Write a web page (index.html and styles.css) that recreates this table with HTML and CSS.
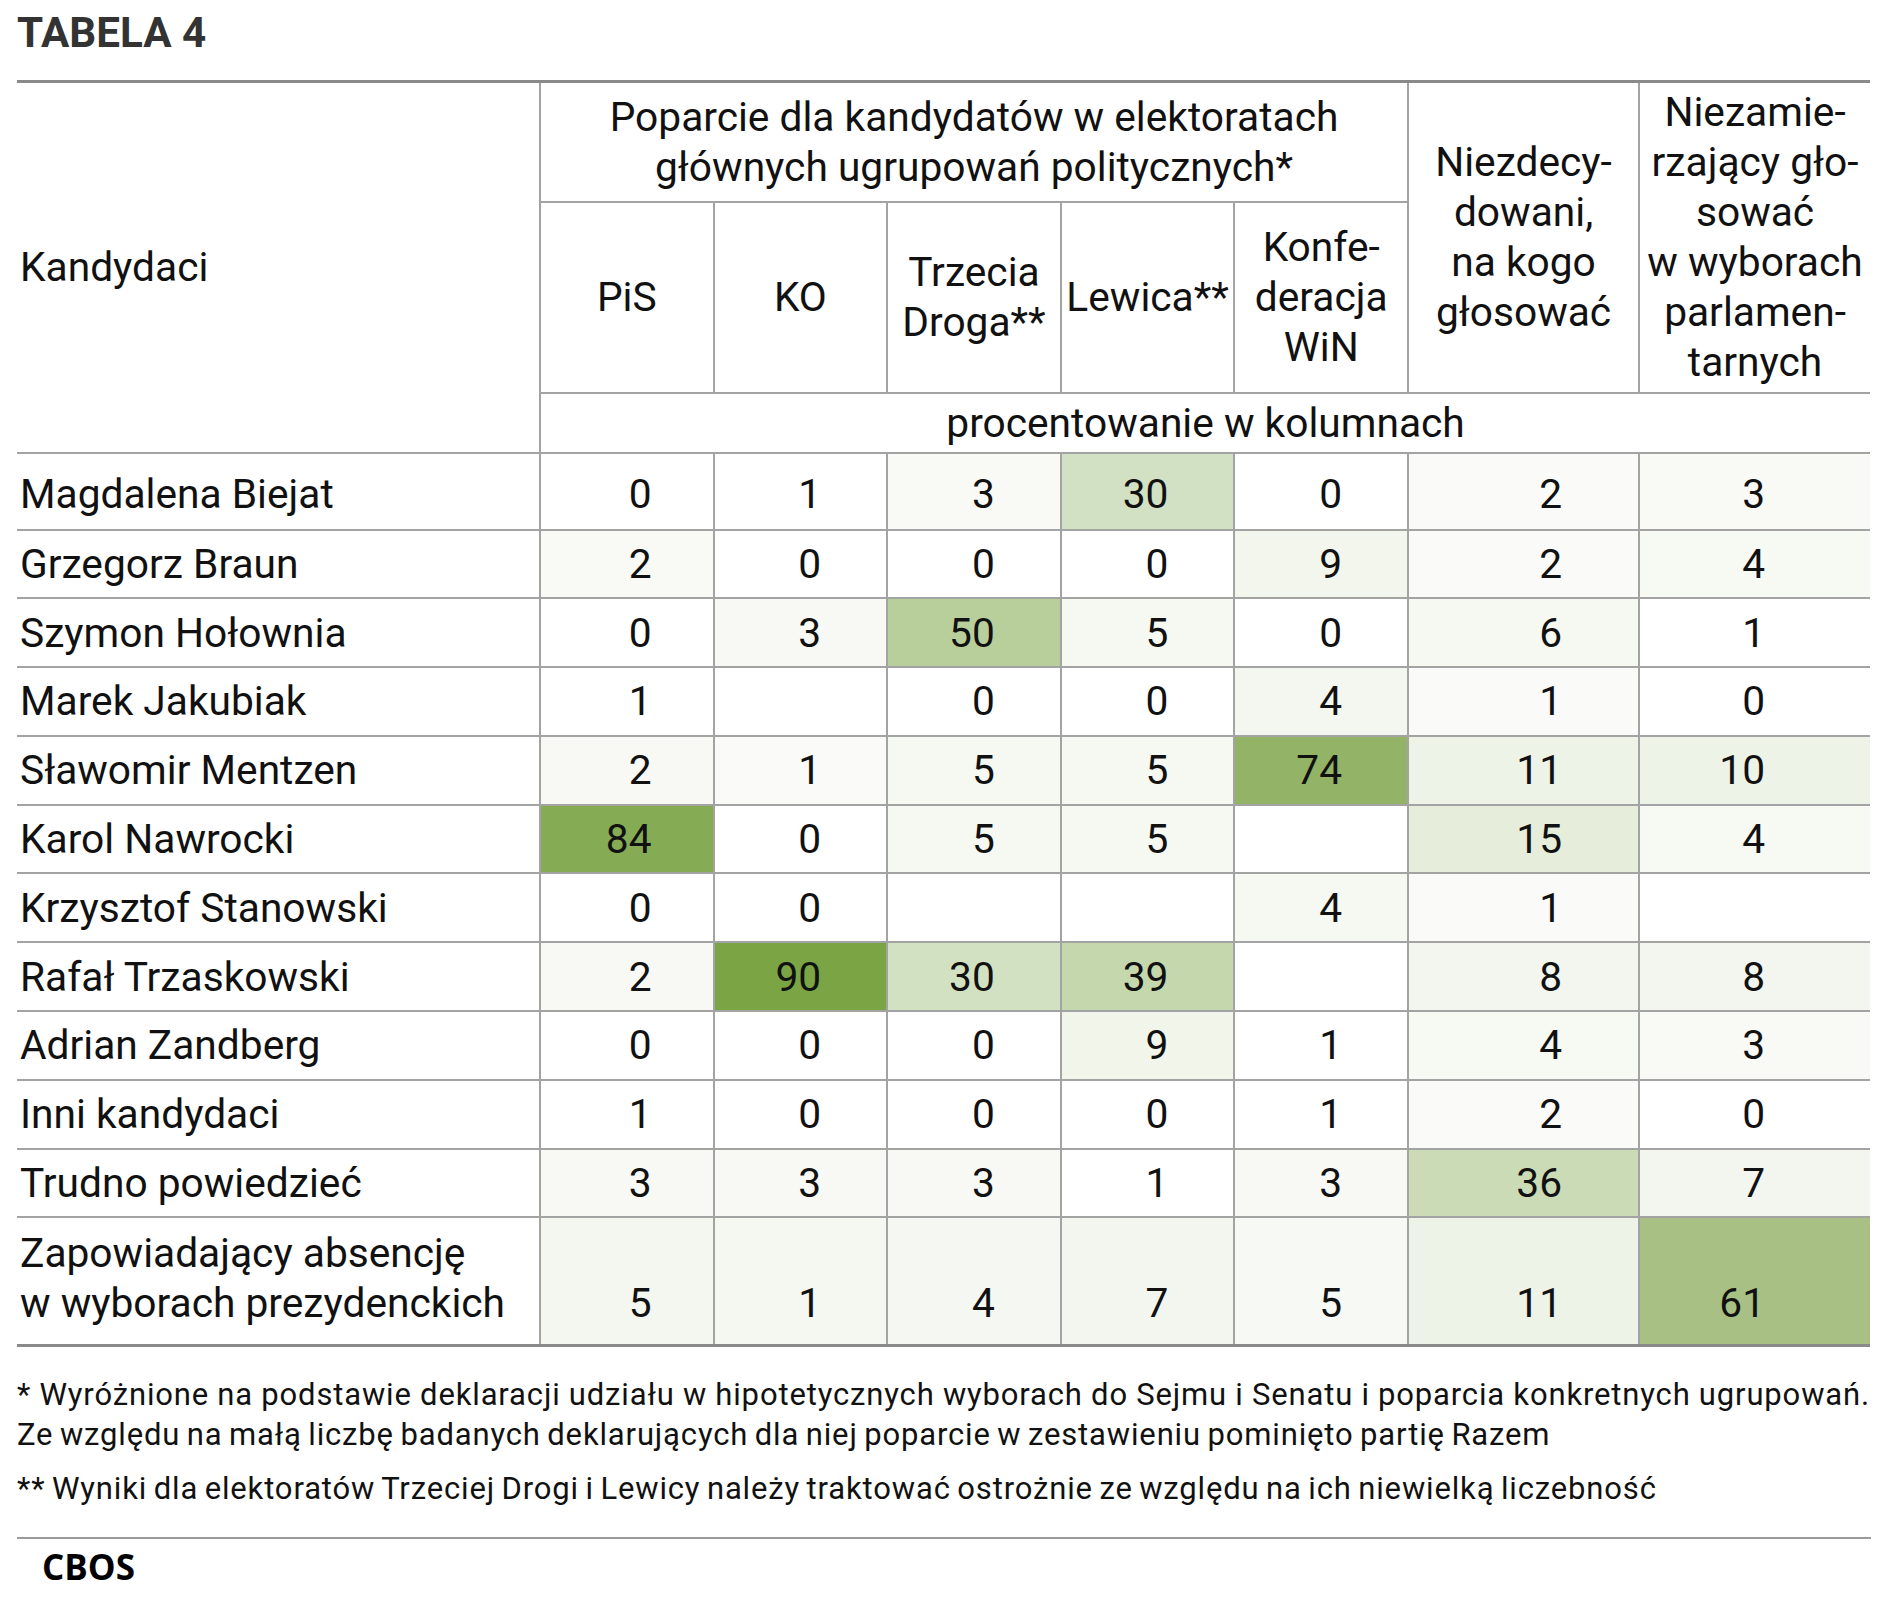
FILE: index.html
```html
<!DOCTYPE html>
<html lang="pl">
<head>
<meta charset="utf-8">
<title>Tabela 4</title>
<link rel="stylesheet" href="styles.css">
</head>
<body>
<div class="page">
  <h1 class="title">TABELA 4</h1>
  <table class="tbl">
    <colgroup>
      <col class="w-name"><col class="w-party"><col class="w-party"><col class="w-party"><col class="w-party"><col class="w-party"><col class="w-extra"><col class="w-extra">
    </colgroup>
    <thead>
      <tr class="h1">
        <th class="name-head" rowspan="3">Kandydaci</th>
        <th class="group" colspan="5">Poparcie dla kandydatów w elektoratach<br>głównych ugrupowań politycznych*</th>
        <th class="extra" rowspan="2">Niezdecy-<br>dowani,<br>na kogo<br>głosować</th>
        <th class="extra last" rowspan="2">Niezamie-<br>rzający gło-<br>sować<br>w wyborach<br>parlamen-<br>tarnych</th>
      </tr>
      <tr class="h2">
        <th class="party">PiS</th>
        <th class="party">KO</th>
        <th class="party">Trzecia<br>Droga**</th>
        <th class="party">Lewica**</th>
        <th class="party">Konfe-<br>deracja<br>WiN</th>
      </tr>
      <tr class="h3">
        <th class="unit last" colspan="7">procentowanie w kolumnach</th>
      </tr>
    </thead>
    <tbody>
      <tr class="first">
        <td class="nm">Magdalena Biejat</td>
        <td>0</td>
        <td>1</td>
        <td style="background:#f9faf6">3</td>
        <td style="background:#d2e0c3">30</td>
        <td>0</td>
        <td style="background:#fafaf8">2</td>
        <td class="last" style="background:#f9faf6">3</td>
      </tr>
      <tr>
        <td class="nm">Grzegorz Braun</td>
        <td style="background:#f9f9f6">2</td>
        <td>0</td>
        <td>0</td>
        <td>0</td>
        <td style="background:#f2f6ec">9</td>
        <td style="background:#fafaf8">2</td>
        <td class="last" style="background:#f7f9f3">4</td>
      </tr>
      <tr>
        <td class="nm">Szymon Hołownia</td>
        <td>0</td>
        <td style="background:#f8f9f5">3</td>
        <td style="background:#b9cf9b">50</td>
        <td style="background:#f6f8f2">5</td>
        <td>0</td>
        <td style="background:#f6f8f2">6</td>
        <td class="last">1</td>
      </tr>
      <tr>
        <td class="nm">Marek Jakubiak</td>
        <td>1</td>
        <td></td>
        <td>0</td>
        <td>0</td>
        <td style="background:#f4f7f0">4</td>
        <td style="background:#fafbf8">1</td>
        <td class="last">0</td>
      </tr>
      <tr>
        <td class="nm">Sławomir Mentzen</td>
        <td style="background:#f8f9f5">2</td>
        <td style="background:#fafbf8">1</td>
        <td style="background:#f6f8f2">5</td>
        <td style="background:#f6f8f2">5</td>
        <td style="background:#93b367">74</td>
        <td style="background:#eef3e7">11</td>
        <td class="last" style="background:#eef3e7">10</td>
      </tr>
      <tr>
        <td class="nm">Karol Nawrocki</td>
        <td style="background:#86ab55">84</td>
        <td>0</td>
        <td style="background:#f6f8f2">5</td>
        <td style="background:#f6f8f2">5</td>
        <td></td>
        <td style="background:#e6eedb">15</td>
        <td class="last" style="background:#f7f9f3">4</td>
      </tr>
      <tr>
        <td class="nm">Krzysztof Stanowski</td>
        <td>0</td>
        <td>0</td>
        <td></td>
        <td></td>
        <td style="background:#f6f8f2">4</td>
        <td style="background:#fafbf8">1</td>
        <td class="last"></td>
      </tr>
      <tr>
        <td class="nm">Rafał Trzaskowski</td>
        <td style="background:#f8f9f5">2</td>
        <td style="background:#7ba444">90</td>
        <td style="background:#d3e1c3">30</td>
        <td style="background:#c5d7ad">39</td>
        <td></td>
        <td style="background:#f2f6ee">8</td>
        <td class="last" style="background:#f2f6ee">8</td>
      </tr>
      <tr>
        <td class="nm">Adrian Zandberg</td>
        <td>0</td>
        <td>0</td>
        <td>0</td>
        <td style="background:#f1f5ea">9</td>
        <td>1</td>
        <td style="background:#f7f9f3">4</td>
        <td class="last" style="background:#f9faf6">3</td>
      </tr>
      <tr>
        <td class="nm">Inni kandydaci</td>
        <td>1</td>
        <td>0</td>
        <td>0</td>
        <td>0</td>
        <td>1</td>
        <td style="background:#fafaf8">2</td>
        <td class="last">0</td>
      </tr>
      <tr>
        <td class="nm">Trudno powiedzieć</td>
        <td style="background:#f8f9f5">3</td>
        <td style="background:#f8f9f5">3</td>
        <td style="background:#f8f9f5">3</td>
        <td>1</td>
        <td style="background:#f8f9f5">3</td>
        <td style="background:#cbdbb5">36</td>
        <td class="last" style="background:#f3f6ef">7</td>
      </tr>
      <tr class="final">
        <td class="nm">Zapowiadający absencję<br>w wyborach prezydenckich</td>
        <td style="background:#f4f6f0">5</td>
        <td style="background:#f5f7f1">1</td>
        <td style="background:#f5f7f2">4</td>
        <td style="background:#f3f6ef">7</td>
        <td style="background:#f7f9f4">5</td>
        <td style="background:#eef3e7">11</td>
        <td class="last" style="background:#a8c083">61</td>
      </tr>
    </tbody>
  </table>
  <div class="notes">
    <p><span class="just">* Wyróżnione na podstawie deklaracji udziału w hipotetycznych wyborach do Sejmu i Senatu i poparcia konkretnych ugrupowań.</span>Ze względu na małą liczbę badanych deklarujących dla niej poparcie w zestawieniu pominięto partię Razem</p>
    <p>** Wyniki dla elektoratów Trzeciej Drogi i Lewicy należy traktować ostrożnie ze względu na ich niewielką liczebność</p>
  </div>
  <div class="rule"></div>
  <div class="source">CBOS</div>
</div>
</body>
</html>
```

FILE: styles.css
```css
* {
  box-sizing: border-box;
}

body {
  margin: 0;
  background: #ffffff;
  color: #111111;
  font-family: Roboto, "Liberation Sans", sans-serif;
}

.page {
  width: 1891px;
  padding: 8px 21px 0 17px;
}

.title {
  margin: 0;
  font-size: 42.2px;
  line-height: 50px;
  font-weight: 700;
  color: #333333;
}

.tbl {
  margin-top: 22px;
  width: 1853px;
  border-collapse: collapse;
  table-layout: fixed;
  font-size: 40.7px;
  line-height: 50px;
}

.w-name { width: 523px; }
.w-party { width: 173.6px; }
.w-extra { width: 231px; }

.tbl th,
.tbl td {
  padding: 0;
  border: 2px solid #a3a3a3;
  font-weight: 400;
  white-space: nowrap;
}

.tbl th {
  text-align: center;
  vertical-align: middle;
}

.tbl .h1 th {
  border-top: 3px solid #8a8a8a;
}

.tbl .h1 { height: 120px; }
.tbl .h2 { height: 191px; }
.tbl .h3 { height: 60px; }

.tbl .name-head {
  text-align: left;
  padding-left: 3px;
  border-left: none;
}

.tbl .last {
  border-right: none;
}

.tbl tbody tr { height: 68.8px; }
.tbl tbody tr.first { height: 77px; }
.tbl tbody tr.final { height: 128px; }

.tbl td {
  text-align: right;
  vertical-align: middle;
}

.tbl td.nm {
  text-align: left;
  padding-left: 3px;
  border-left: none;
}

.tbl tr.first td {
  padding-top: 6px;
}

.tbl td:nth-child(2) { padding-right: 61px; }
.tbl td:nth-child(3) { padding-right: 65px; }
.tbl td:nth-child(4) { padding-right: 65px; }
.tbl td:nth-child(5) { padding-right: 65px; }
.tbl td:nth-child(6) { padding-right: 65px; }
.tbl td:nth-child(7) { padding-right: 76px; }
.tbl td:nth-child(8) { padding-right: 105px; }

.tbl tr.final td {
  vertical-align: bottom;
  padding-bottom: 16px;
  border-bottom: 3px solid #8a8a8a;
}

.notes {
  margin-top: 28px;
  width: 1853px;
  font-size: 31px;
  line-height: 40px;
  letter-spacing: 0.85px;
  word-spacing: -2px;
  color: #111111;
  white-space: nowrap;
}

.notes p {
  margin: 0;
}

.notes p + p {
  margin-top: 14px;
}

.notes .just {
  display: block;
  width: 1853px;
  white-space: normal;
  text-align: justify;
  text-align-last: justify;
}

.rule {
  margin-top: 28px;
  width: 1854px;
  border-top: 2px solid #9a9a9a;
}

.source {
  margin-top: 8px;
  padding-left: 25px;
  font-family: "Open Sans", "Liberation Sans", sans-serif;
  font-weight: 700;
  font-size: 35px;
  line-height: 40px;
  color: #000000;
}
```
